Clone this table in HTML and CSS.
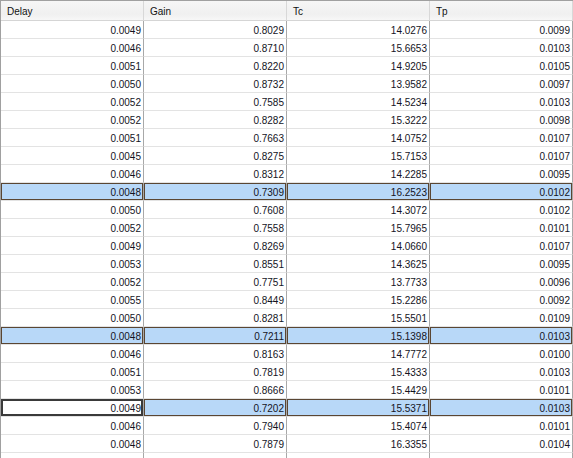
FILE: index.html
```html
<!DOCTYPE html>
<html>
<head>
<meta charset="utf-8">
<link rel="stylesheet" href="styles.css">
</head>
<body>
<table class="grid">
<thead>
<tr><th>Delay</th><th>Gain</th><th>Tc</th><th>Tp</th></tr>
</thead>
<tbody>
<tr><td>0.0049</td><td>0.8029</td><td>14.0276</td><td>0.0099</td></tr>
<tr><td>0.0046</td><td>0.8710</td><td>15.6653</td><td>0.0103</td></tr>
<tr><td>0.0051</td><td>0.8220</td><td>14.9205</td><td>0.0105</td></tr>
<tr><td>0.0050</td><td>0.8732</td><td>13.9582</td><td>0.0097</td></tr>
<tr><td>0.0052</td><td>0.7585</td><td>14.5234</td><td>0.0103</td></tr>
<tr><td>0.0052</td><td>0.8282</td><td>15.3222</td><td>0.0098</td></tr>
<tr><td>0.0051</td><td>0.7663</td><td>14.0752</td><td>0.0107</td></tr>
<tr><td>0.0045</td><td>0.8275</td><td>15.7153</td><td>0.0107</td></tr>
<tr><td>0.0046</td><td>0.8312</td><td>14.2285</td><td>0.0095</td></tr>
<tr class="sel"><td>0.0048</td><td>0.7309</td><td>16.2523</td><td>0.0102</td></tr>
<tr><td>0.0050</td><td>0.7608</td><td>14.3072</td><td>0.0102</td></tr>
<tr><td>0.0052</td><td>0.7558</td><td>15.7965</td><td>0.0101</td></tr>
<tr><td>0.0049</td><td>0.8269</td><td>14.0660</td><td>0.0107</td></tr>
<tr><td>0.0053</td><td>0.8551</td><td>14.3625</td><td>0.0095</td></tr>
<tr><td>0.0052</td><td>0.7751</td><td>13.7733</td><td>0.0096</td></tr>
<tr><td>0.0055</td><td>0.8449</td><td>15.2286</td><td>0.0092</td></tr>
<tr><td>0.0050</td><td>0.8281</td><td>15.5501</td><td>0.0109</td></tr>
<tr class="sel"><td>0.0048</td><td>0.7211</td><td>15.1398</td><td>0.0103</td></tr>
<tr><td>0.0046</td><td>0.8163</td><td>14.7772</td><td>0.0100</td></tr>
<tr><td>0.0051</td><td>0.7819</td><td>15.4333</td><td>0.0103</td></tr>
<tr><td>0.0053</td><td>0.8666</td><td>15.4429</td><td>0.0101</td></tr>
<tr class="sel"><td class="focus">0.0049</td><td>0.7202</td><td>15.5371</td><td>0.0103</td></tr>
<tr><td>0.0046</td><td>0.7940</td><td>15.4074</td><td>0.0101</td></tr>
<tr><td>0.0048</td><td>0.7879</td><td>16.3355</td><td>0.0104</td></tr>
<tr><td></td><td></td><td></td><td></td></tr>
</tbody>
</table>
</body>
</html>
```
FILE: styles.css
```css
html, body {
  margin: 0;
  padding: 0;
  background: #ffffff;
  overflow: hidden;
}

.grid {
  table-layout: fixed;
  border-collapse: separate;
  border-spacing: 0;
  width: 573px;
  border-left: 1px solid #a0a0a0;
  border-top: 1px solid #a0a0a0;
  font-family: "Liberation Sans", Arial, sans-serif;
  font-size: 10px;
  color: #14141e;
}

.grid th {
  width: 142px;
  height: 20px;
  padding: 1px 0 0 6px;
  box-sizing: border-box;
  text-align: left;
  font-weight: normal;
  color: #111111;
  background: linear-gradient(#f6f6f6, #f0f0f0 70%, #f7f7f7);
  border-right: 1px solid #d8d8d8;
  border-bottom: 1px solid #d5d5d5;
  vertical-align: middle;
}

.grid td {
  height: 18px;
  padding: 2px 2px 0 0;
  box-sizing: border-box;
  text-align: right;
  line-height: 15px;
  border-right: 1px solid #a8a8a8;
  border-bottom: 1px solid #e3e3e3;
  white-space: nowrap;
  overflow: hidden;
}

.grid tr.sel td {
  background: #b8d8f8;
  box-shadow: inset 0 0 0 1px #5a4633;
}

.grid tr.sel td.focus {
  background: #ffffff;
  box-shadow: inset 0 0 0 2px #3a3a3a;
}
```
